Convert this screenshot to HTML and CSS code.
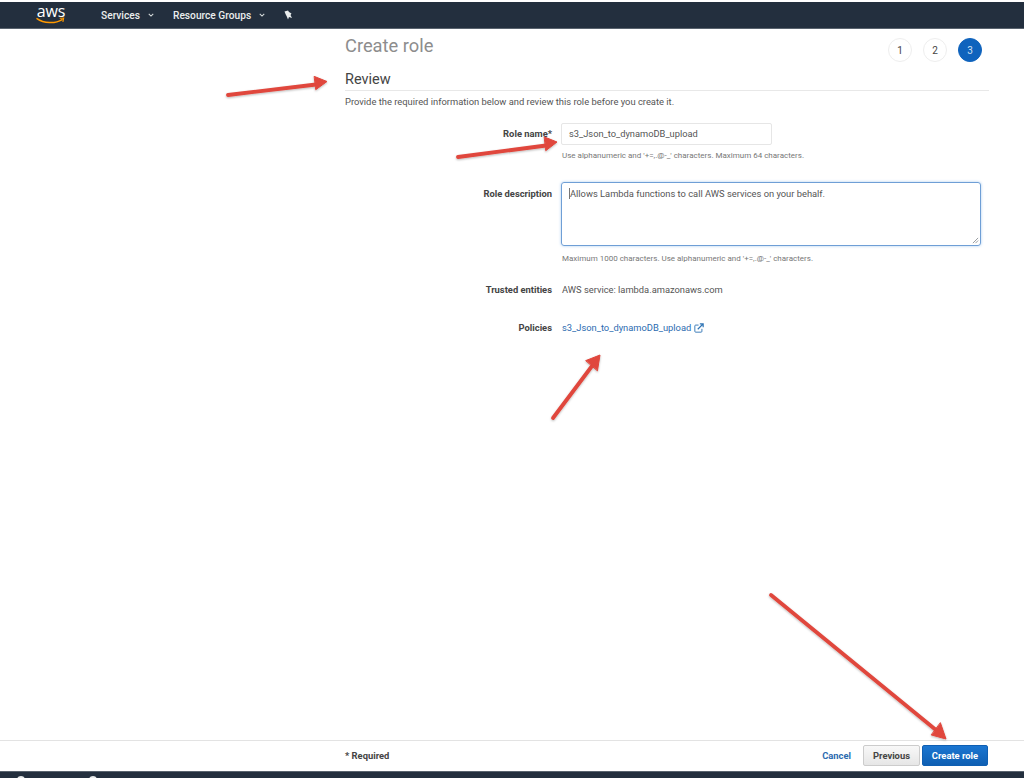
FILE: index.html
```html
<!DOCTYPE html>
<html lang="en">
<head>
<meta charset="utf-8">
<title>Create role</title>
<link rel="stylesheet" href="styles.css">
</head>
<body>
<div class="page">
  <header class="topbar">
    <div class="logo">
      <span class="logo-text">aws</span>
      <svg class="swoosh" viewBox="0 0 30 8" aria-hidden="true"><path d="M1 1.5C8 6.5 20 7 27 2.5" fill="none" stroke="#f90" stroke-width="1.5" stroke-linecap="round"/><path d="M24.5 1.2L28.6 1L27.8 4.8" fill="none" stroke="#f90" stroke-width="1.2"/></svg>
    </div>
    <nav class="nav">
      <span class="nav-item services">Services <svg class="caret" viewBox="0 0 8 5"><path d="M1 1l3 3 3-3" fill="none" stroke="#d5dbdb" stroke-width="1.4"/></svg></span>
      <span class="nav-item groups">Resource Groups <svg class="caret" viewBox="0 0 8 5"><path d="M1 1l3 3 3-3" fill="none" stroke="#d5dbdb" stroke-width="1.4"/></svg></span>
      <svg class="pin" viewBox="0 0 10 10"><path d="M1.500 1.500L5 .5 6 2 8.500 3.500 7.500 5 9 8 6 7 5 9.500 3.800 6.500 2.500 4Z" fill="#eaeded"/></svg>
    </nav>
  </header>

  <main class="main">
    <div class="title-row">
      <h1 class="title">Create role</h1>
      <ol class="steps">
        <li class="step">1</li>
        <li class="step">2</li>
        <li class="step step-active">3</li>
      </ol>
    </div>
    <h2 class="section">Review</h2>
    <p class="intro">Provide the required information below and review this role before you create it.</p>

    <div class="form">
      <div class="row row-name">
        <div class="label">Role name*</div>
        <div class="field">
          <div class="input">s3_Json_to_dynamoDB_upload</div>
          <div class="hint">Use alphanumeric and '+=,.@-_' characters. Maximum 64 characters.</div>
        </div>
      </div>
      <div class="row row-desc">
        <div class="label">Role description</div>
        <div class="field">
          <div class="textarea"><span class="cursor"></span>Allows Lambda functions to call AWS services on your behalf.
            <svg class="grip" viewBox="0 0 8 8"><path d="M7 1L1 7M7 4L4 7" stroke="#8a8f94" stroke-width="1"/></svg>
          </div>
          <div class="hint">Maximum 1000 characters. Use alphanumeric and '+=,.@-_' characters.</div>
        </div>
      </div>
      <div class="row row-trust">
        <div class="label">Trusted entities</div>
        <div class="value">AWS service: lambda.amazonaws.com</div>
      </div>
      <div class="row row-policy">
        <div class="label">Policies</div>
        <div class="value"><a class="link" href="#">s3_Json_to_dynamoDB_upload</a>
          <svg class="ext" viewBox="0 0 12 12"><path d="M9.500 7v3a1 1 0 0 1-1 1H2a1 1 0 0 1-1-1V3.500a1 1 0 0 1 1-1h3.500" fill="none" stroke="#2f74b5" stroke-width="1.100"/><path d="M4.500 7.500L10.500 1.500M7 1h4v4" fill="none" stroke="#2f74b5" stroke-width="1.400"/></svg>
        </div>
      </div>
    </div>
  </main>

  <footer class="footer">
    <div class="required">* Required</div>
    <div class="actions">
      <a class="cancel" href="#">Cancel</a>
      <button class="btn btn-prev" type="button">Previous</button>
      <button class="btn btn-primary" type="button">Create role</button>
    </div>
  </footer>
  <div class="bottombar"><span class="dot dot-a"></span><span class="dot dot-b"></span></div>

  <svg class="arrows" viewBox="0 0 1024 778" aria-hidden="true">
    <defs>
      <filter id="soft" x="-10%" y="-10%" width="120%" height="120%"><feDropShadow dx="0" dy="1" stdDeviation="1" flood-color="#000" flood-opacity=".28"/></filter>
    </defs>
    <g filter="url(#soft)" fill="#e0463c" stroke="#e0463c" stroke-linecap="round" stroke-linejoin="round">
      <path d="M228 95L316 84.500" stroke-width="3.800"/><path d="M314.500 76.500L327 81.500 316 89.500Z" stroke-width="1"/>
      <path d="M458 157L546 145.500" stroke-width="3.800"/><path d="M544.500 137L557 142 546 150.500Z" stroke-width="1"/>
      <path d="M553 418L592 366" stroke-width="3.800"/><path d="M586 360.500L600 355 597.500 370.500Z" stroke-width="1"/>
      <path d="M771 595L936 730" stroke-width="3.800"/><path d="M940.500 723L946 739 931.500 735Z" stroke-width="1"/>
    </g>
  </svg>
</div>
</body>
</html>
```
FILE: styles.css
```css
* { box-sizing: border-box; }
html, body { margin: 0; padding: 0; background: #fff; }
body { font-family: Roboto, "Liberation Sans", sans-serif; color: #444; overflow: hidden; }
.page { position: relative; width: 1024px; height: 778px; display: flex; flex-direction: column; padding-top: 2px; }

.topbar { height: 27px; flex: none; background: #232f3e; display: flex; align-items: center; padding-left: 36px; color: #eaeded; border-bottom: 1px solid #59636e; }
.logo { width: 30px; height: 24px; position: relative; flex: none; }
.logo-text { display: block; text-align: center; font: 400 16px/16px "Open Sans", sans-serif; color: #fff; margin-top: 0; letter-spacing: -.2px; }
.swoosh { position: absolute; left: 0; top: 14px; width: 29px; height: 8px; }
.nav { display: flex; align-items: center; margin-left: 35px; }
.nav-item { font-size: 10.200px; font-weight: 500; white-space: nowrap; display: flex; align-items: center; }
.caret { width: 6px; height: 4px; margin-left: 8px; }
.services { margin-right: 19px; }
.groups { margin-right: 18px; }
.pin { width: 10px; height: 10px; }

.main { flex: 1; padding: 0 35px 0 345px; min-height: 0; }
.title-row { display: flex; justify-content: space-between; align-items: flex-start; height: 40px; padding-right: 7px; }
.title { margin: 6px 0 0; font-size: 18.300px; line-height: 22px; font-weight: 400; color: #8d8d8d; }
.steps { list-style: none; display: flex; gap: 11px; margin: 9px 0 0; padding: 0; }
.step { width: 24px; height: 24px; border-radius: 50%; border: 1px solid #eee; display: flex; align-items: center; justify-content: center; font-size: 10px; color: #444; }
.step-active { background: #0f63bd; border-color: #0f63bd; color: #cfe0f3; }
.section { margin: 0; height: 22px; font-size: 14.500px; line-height: 21px; font-weight: 400; color: #444; border-bottom: 1px solid #e8e8e8; }
.intro { margin: 4px 0 0; font-size: 9.400px; line-height: 13px; color: #555; }

.form { margin-top: 15px; }
.row { display: grid; grid-template-columns: 207px 420px; column-gap: 9px; align-items: start; }
.label { text-align: right; font-size: 9.400px; font-weight: 700; color: #444; line-height: 13px; }
.row-name { height: 59px; }
.row-name .label { padding-top: 4px; }
.input { width: 211px; height: 22px; border: 1px solid #e6e6e6; border-radius: 2px; padding: 0 7px; font-size: 9.300px; line-height: 20px; color: #555; }
.hint { font-size: 8px; line-height: 11px; color: #777; margin-top: 5px; padding-left: 1px; }
.row-desc { height: 101px; }
.row-desc .label { padding-top: 5px; }
.textarea { position: relative; width: 420px; height: 64px; border: 1px solid #6f9fd6; box-shadow: 0 0 3px #a9cbef; border-radius: 3px; padding: 4px 7px; font-size: 9.330px; line-height: 13px; color: #555; }
.cursor { display: inline-block; width: 1px; height: 11px; background: #777; vertical-align: -2px; }
.grip { position: absolute; right: 1px; bottom: 1px; width: 7px; height: 7px; }
.row-desc .hint { margin-top: 7px; }
.row-trust { height: 38px; }
.row-policy { height: 20px; }
.value { font-size: 9.330px; line-height: 13px; color: #555; display: flex; align-items: center; gap: 3px; padding-left: 1px; }
.link { color: #2c6bb0; text-decoration: none; }
.ext { width: 10px; height: 10px; }

.footer { height: 31px; flex: none; border-top: 1px solid #e3e3e3; padding: 0 36px 1px 345px; display: flex; align-items: center; justify-content: space-between; }
.required { font-size: 9.400px; font-weight: 700; color: #444; }
.actions { display: flex; align-items: center; }
.cancel { font-size: 9.400px; font-weight: 700; color: #2c6bb0; text-decoration: none; margin-right: 12px; }
.btn { height: 21px; border-radius: 2px; font: 700 9.400px Roboto, "Liberation Sans", sans-serif; padding: 0; }
.btn-prev { width: 57px; background: linear-gradient(#f8f8f8, #e6e6e6); border: 1px solid #ccc; color: #444; margin-right: 2px; }
.btn-primary { width: 66px; background: linear-gradient(#1b76d1, #0f5fb3); border: 1px solid #0f5fb3; color: #fff; }

.bottombar { height: 7px; flex: none; background: #232f3e; position: relative; overflow: hidden; border-top: 1px solid #59636e; }
.dot { position: absolute; top: 4px; width: 8px; height: 8px; border-radius: 50%; background: #eaeded; }
.dot-a { left: 17px; }
.dot-b { left: 89px; }

.arrows { position: absolute; left: 0; top: 0; width: 1024px; height: 778px; pointer-events: none; }
```
